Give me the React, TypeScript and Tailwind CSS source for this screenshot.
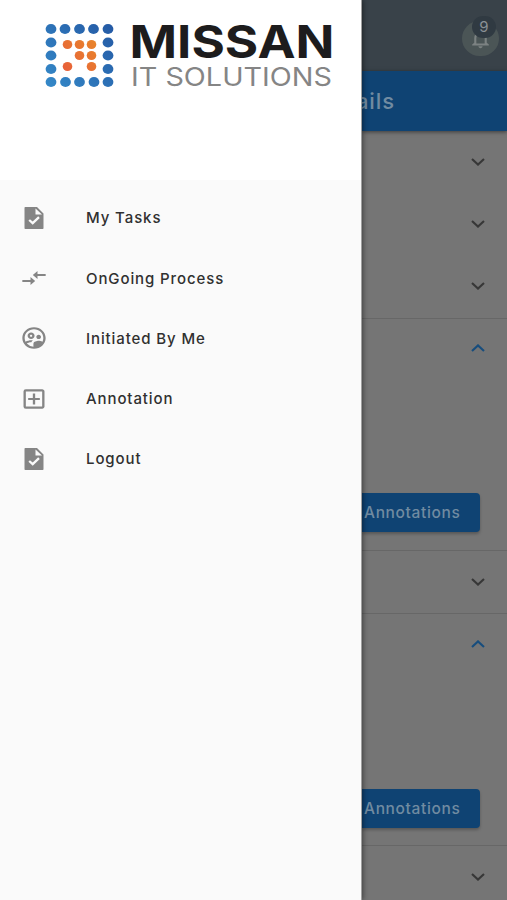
import { MdCompareArrows, MdOutlineAddBox, MdOutlineSupervisedUserCircle, MdNotificationsNone } from "react-icons/md";

const rim = [
  [51, 29], [65, 29], [79.5, 29], [93.5, 29], [108, 29],
  [51, 42.5], [108, 42.5], [51, 55.5], [108, 55.5], [51, 69], [108, 69],
  [51, 82], [65.5, 82], [79.5, 82], [94, 82], [108, 82],
];
const core = [[67.5, 44.5], [79.5, 44.5], [91.5, 44.5], [79.5, 55.5], [91.5, 55.5], [67.5, 66.5], [91.5, 66.5]];

function Logo() {
  return (
    <svg width="361" height="110" viewBox="0 0 361 110" className="block" role="img">
      <defs>
        <linearGradient id="rim" gradientUnits="userSpaceOnUse" x1="45" y1="88" x2="113" y2="24">
          <stop offset="0" stopColor="#358ac9" />
          <stop offset="1" stopColor="#2459a4" />
        </linearGradient>
        <linearGradient id="core" gradientUnits="userSpaceOnUse" x1="62" y1="70" x2="97" y2="40">
          <stop offset="0" stopColor="#e85f3a" />
          <stop offset="1" stopColor="#e8862b" />
        </linearGradient>
      </defs>
      {rim.map(([x, y]) => <ellipse key={`${x}-${y}`} cx={x} cy={y} rx="5.4" ry="5.1" fill="url(#rim)" />)}
      {core.map(([x, y]) => <ellipse key={`${x}-${y}`} cx={x} cy={y} rx="4.8" ry="4.5" fill="url(#core)" />)}
      <text x="129.5" y="58.3" fontFamily="Inter, sans-serif" fontSize="45" fontWeight="700" fill="#1d1c1d" textLength="205" lengthAdjust="spacingAndGlyphs">MISSAN</text>
      <text x="131" y="86.3" fontFamily="Inter, sans-serif" fontSize="25.6" fill="#858585" textLength="201" lengthAdjust="spacingAndGlyphs">IT SOLUTIONS</text>
    </svg>
  );
}

function TaskIcon() {
  return (
    <svg width="20" height="22" viewBox="0 0 20 22" fill="none">
      <path fillRule="evenodd" d="M1 0H13L19.5 6.5V21.2Q19.5 22 18.7 22H1.3Q.5 22 .5 21.2V.8Q.5 0 1.3 0ZM11.5 1.6V7.6H18Z" fill="#858585" />
      <path d="M5.2 13 8.7 16.2 15 10.2" stroke="#fafafa" strokeWidth="2.3" />
    </svg>
  );
}

const items = [
  { label: "My Tasks", icon: <TaskIcon /> },
  { label: "OnGoing Process", icon: <MdCompareArrows className="h-6 w-7" preserveAspectRatio="none" /> },
  { label: "Initiated By Me", icon: <MdOutlineSupervisedUserCircle className="h-[26px] w-7" preserveAspectRatio="none" /> },
  { label: "Annotation", icon: <MdOutlineAddBox className="h-[26px] w-7" preserveAspectRatio="none" /> },
  { label: "Logout", icon: <TaskIcon /> },
];

function Chevron({ up = false }: { up?: boolean }) {
  return (
    <svg width="14" height="8" viewBox="0 0 14 8" fill="none" className={up ? "text-[#174d7d]" : "text-[#373737]"}>
      <path d={up ? "M1 7 7 1.4 13 7" : "M1 1 7 6.6 13 1"} stroke="currentColor" strokeWidth="2.1" />
    </svg>
  );
}

function Row({ up = false, className }: { up?: boolean; className: string }) {
  return <div className={`flex shrink-0 justify-end pr-[22px] ${className}`}><Chevron up={up} /></div>;
}

function Panel({ className }: { className: string }) {
  return (
    <div className={`flex h-[233px] shrink-0 flex-col justify-between border-y border-[#676767] ${className}`}>
      <Row up className="" />
      <div className="flex h-[39px] w-[118px] items-center whitespace-nowrap rounded-r bg-[#0f4373] pl-[2px] text-[15.5px] font-medium tracking-[0.65px] text-[#718ba1] shadow-[0_2px_3px_#00000040]">
        Annotations
      </div>
    </div>
  );
}

export default function App() {
  return (
    <div className="flex h-[900px] w-[507px] overflow-hidden bg-[#757575] font-[Inter,sans-serif]">
      <aside className="z-10 flex w-[362px] shrink-0 flex-col border-r border-[#a0a0a0] bg-[#fafafa] shadow-[1px_0_5px_#00000075]">
        <div className="h-[180px] shrink-0 bg-white"><Logo /></div>
        <nav className="pt-2">
          {items.map(({ label, icon }) => (
            <div key={label} className="flex h-[60.2px] items-center">
              <div className="flex w-[68px] justify-center text-[#858585]">{icon}</div>
              <span className="ml-[18px] whitespace-nowrap pt-px text-[15px] font-medium tracking-[0.9px] text-[#303030]">{label}</span>
            </div>
          ))}
        </nav>
      </aside>
      <main className="flex min-w-0 flex-1 flex-col">
        <header className="flex h-[71px] shrink-0 justify-end bg-[#394249] pr-2 pt-[21px]">
          <div className="relative flex h-[35px] w-[37px] items-center justify-center rounded-full bg-[#4b5556] text-[#7c8282]">
            <MdNotificationsNone className="h-[22px] w-[25px]" preserveAspectRatio="none" />
            <div className="absolute -top-[5px] left-[10px] flex h-[22px] w-[24px] items-center justify-center rounded-full bg-[#303a42] text-[15px] text-[#8a9095]">9</div>
          </div>
        </header>
        <div className="z-[1] flex h-[60px] shrink-0 items-center justify-end bg-[#0f4373] pr-[112px] shadow-[0_1px_4px_#00000080]">
          <h1 className="whitespace-nowrap text-[22px] font-medium tracking-[0.9px] text-[#718ba1]">Details</h1>
        </div>
        <Row className="h-[62px] pt-[27px]" />
        <Row className="h-[62px] pt-[27px]" />
        <Row className="h-[63px] pt-[27px]" />
        <Panel className="pb-[18px] pt-[25px]" />
        <Row className="h-[62px] pt-[27px]" />
        <Panel className="pb-[17px] pt-[26px]" />
        <Row className="h-[54px] pt-[27px]" />
      </main>
    </div>
  );
}
